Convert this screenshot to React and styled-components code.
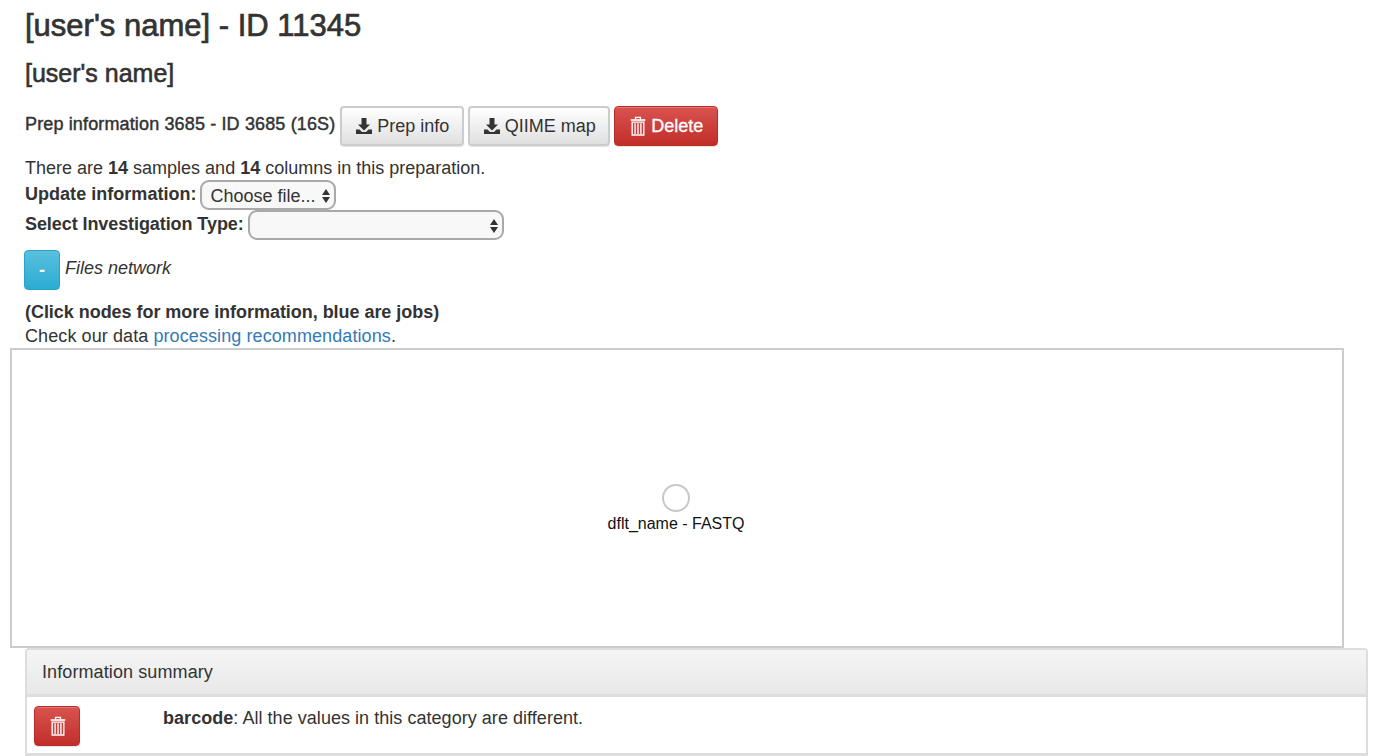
import styled, { createGlobalStyle } from 'styled-components';

const GlobalStyle = createGlobalStyle`
    html, body {
        margin: 0;
        padding: 0;
        background: #fff;
    }
    body {
        font-family: "Liberation Sans", Arial, sans-serif;
        font-size: 18px;
        line-height: 24px;
        color: #333;
        height: 756px;
        overflow: hidden;
    }
`;

const Page = styled.div`
    padding: 0 18px 0 25px;
    display: flex;
    flex-direction: column;
`;

const Title = styled.h1`
    margin: 8px 0 0 0;
    font-size: 31px;
    line-height: 36px;
    font-weight: 500;
    -webkit-text-stroke: 0.7px #333;
`;

const SubTitle = styled.h2`
    margin: 14px 0 0 0;
    font-size: 25px;
    line-height: 30px;
    font-weight: 500;
    -webkit-text-stroke: 0.6px #333;
`;

const PrepRow = styled.div`
    display: flex;
    align-items: center;
    gap: 4px;
    margin-top: 18px;
    height: 40px;
`;

const PrepTitle = styled.span`
    font-size: 18px;
    font-weight: 500;
    letter-spacing: 0.14px;
    -webkit-text-stroke: 0.45px #333;
    margin: -4px 1px 0 0;
`;

const Button = styled.button`
    display: inline-flex;
    align-items: center;
    justify-content: center;
    gap: 4px;
    height: 40px;
    padding: 0;
    width: ${(p) => p.$width || 'auto'};
    white-space: nowrap;
    font: inherit;
    font-size: 18px;
    border-radius: 4px;
    color: #333;
    border: 2px solid #ccc;
    box-shadow: inset 0 1px 0 rgba(255, 255, 255, 0.2), 0 1px 1px rgba(0, 0, 0, 0.12);
    background: linear-gradient(to bottom, #fff, #e0e0e0);
`;

const DangerButton = styled(Button)`
    color: #fff;
    border: 1px solid #b92c28;
    background: linear-gradient(to bottom, #d9534f, #c12e2a);
    -webkit-text-stroke: 0.3px #fff;
`;

const CountLine = styled.p`
    margin: 10px 0 0 0;
    height: 24px;
`;

const FormRow = styled.div`
    display: flex;
    align-items: center;
    gap: ${(p) => p.$gap || '4px'};
    height: 30px;
`;

const Label = styled.label`
    font-weight: 700;
    margin-top: -2px;
    letter-spacing: ${(p) => p.$spacing || '0'};
`;

const FakeSelect = styled.div`
    box-sizing: border-box;
    display: flex;
    align-items: center;
    justify-content: space-between;
    width: ${(p) => p.$width};
    height: 30px;
    padding: 1px 3px 0 9px;
    border: 2px solid #a9a9a9;
    border-radius: 9px;
    background: #f8f8f8;
    font-size: 18px;
`;

const ToggleRow = styled.div`
    display: flex;
    align-items: center;
    gap: 5px;
    margin: 10px 0 0 -1px;
    height: 40px;
`;

const ToggleButton = styled.button`
    box-sizing: border-box;
    width: 36px;
    height: 40px;
    padding: 0;
    font: inherit;
    font-weight: 700;
    color: #fff;
    border: 1px solid #28a4c9;
    border-radius: 4px;
    background: linear-gradient(to bottom, #5bc0de, #2aabd2);
`;

const ToggleText = styled.i`
    margin-top: -5px;
`;

const Note = styled.div`
    margin-top: 10px;
    font-weight: 700;
    line-height: 24px;
    letter-spacing: -0.04px;
`;

const Plain = styled.div`
    line-height: 24px;
    letter-spacing: 0.09px;
`;

const Link = styled.a`
    color: #337ab7;
    text-decoration: none;
`;

const Network = styled.div`
    position: relative;
    box-sizing: border-box;
    margin: 0 0 0 -15px;
    width: 1334px;
    height: 300px;
    border: 2px solid #ccc;
    background: #fff;
`;

const Node = styled.div`
    position: absolute;
    left: 650px;
    top: 134px;
    box-sizing: border-box;
    width: 28px;
    height: 28px;
    border: 2px solid #c8c8c8;
    border-radius: 50%;
`;

const NodeLabel = styled.div`
    position: absolute;
    left: 564px;
    top: 164px;
    width: 200px;
    text-align: center;
    font-size: 16px;
    line-height: 20px;
    color: #111;
`;

const Panel = styled.section`
    box-sizing: border-box;
    width: 1343px;
    border: 2px solid #ddd;
    border-radius: 4px 4px 0 0;
    background: #fff;
`;

const PanelHeading = styled.div`
    box-sizing: border-box;
    height: 47px;
    padding: 0 15px;
    display: flex;
    align-items: center;
    letter-spacing: 0.1px;
    border-bottom: 3px solid #ddd;
    background: linear-gradient(to bottom, #f5f5f5, #e8e8e8);
`;

const PanelRow = styled.div`
    display: flex;
    height: 58px;
    padding: 9px 0 0 7px;
    box-sizing: border-box;
    border-bottom: 2px solid #ddd;
`;

const RowButton = styled(DangerButton)`
    box-sizing: border-box;
    width: 46px;
    height: 40px;
    padding: 0 0 0 2px;
    flex: none;
`;

const RowText = styled.div`
    margin: 0 0 0 83px;
    letter-spacing: 0.04px;
`;

const SaveIcon = () => (
    <svg width="18" height="18" viewBox="0 0 18 18" fill="#333">
        <path d="M6.5 1h5v6.5H15L9 13.5 3 7.5h3.5z" />
        <path d="M1 12.5h3.5L7 15h4l2.5-2.5H17V17H1z" />
    </svg>
);

const TrashIcon = ({ size = 18 }) => (
    <svg width={size} height={size * 1.12} viewBox="0 0 16 18" fill="none" stroke="#fff" strokeWidth="1.2">
        <path d="M1.5 3.6h13" strokeWidth="1.5" />
        <path d="M5.8 3.2V1.2h4.4v2" />
        <path d="M2.8 5.4h10.4V17H2.8z" />
        <path d="M5.4 6.5v9.5M8 6.5v9.5M10.6 6.5v9.5" />
    </svg>
);

const SelectArrows = () => (
    <svg width="10" height="16" viewBox="0 0 10 16" fill="#333">
        <path d="M5 1l4 6H1zM5 15L1 9h8z" />
    </svg>
);

const App = () => {
    return (
        <>
            <GlobalStyle />
            <Page>
                <Title>[user's name] - ID 11345</Title>
                <SubTitle>[user's name]</SubTitle>

                {/* PREP HEADER */}
                <PrepRow>
                    <PrepTitle>Prep information 3685 - ID 3685 (16S)</PrepTitle>
                    <Button $width="124px">
                        <SaveIcon />
                        Prep info
                    </Button>
                    <Button $width="142px">
                        <SaveIcon />
                        QIIME map
                    </Button>
                    <DangerButton $width="104px">
                        <TrashIcon />
                        Delete
                    </DangerButton>
                </PrepRow>

                <CountLine>
                    There are <b>14</b> samples and <b>14</b> columns in this preparation.
                </CountLine>
                <FormRow $gap="3px">
                    <Label $spacing="0.03px">Update information:</Label>
                    <FakeSelect $width="136px">
                        Choose file...
                        <SelectArrows />
                    </FakeSelect>
                </FormRow>
                <FormRow>
                    <Label $spacing="-0.08px">Select Investigation Type:</Label>
                    <FakeSelect $width="256px">
                        <span />
                        <SelectArrows />
                    </FakeSelect>
                </FormRow>

                <ToggleRow>
                    <ToggleButton>-</ToggleButton>
                    <ToggleText>Files network</ToggleText>
                </ToggleRow>

                <Note>(Click nodes for more information, blue are jobs)</Note>
                <Plain>
                    Check our data <Link>processing recommendations</Link>.
                </Plain>

                {/* NETWORK */}
                <Network>
                    <Node />
                    <NodeLabel>dflt_name - FASTQ</NodeLabel>
                </Network>

                {/* SUMMARY */}
                <Panel>
                    <PanelHeading>Information summary</PanelHeading>
                    <PanelRow>
                        <RowButton>
                            <TrashIcon />
                        </RowButton>
                        <RowText>
                            <b>barcode</b>: All the values in this category are different.
                        </RowText>
                    </PanelRow>
                </Panel>
            </Page>
        </>
    );
};

export default App;
